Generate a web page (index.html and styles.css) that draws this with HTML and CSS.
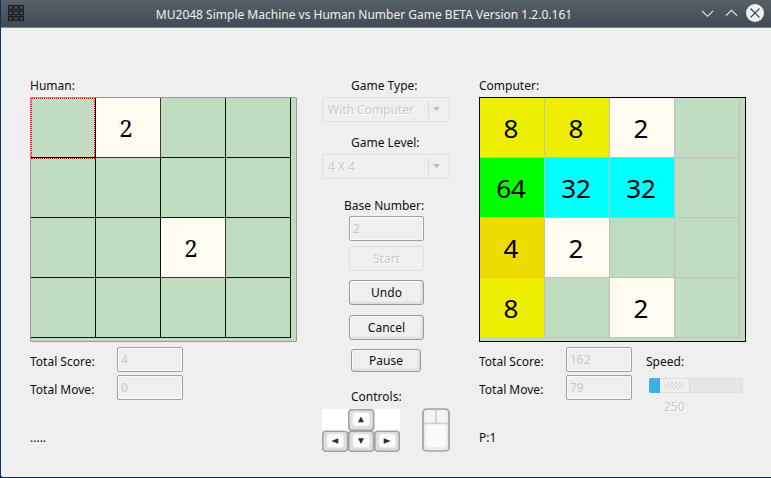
FILE: index.html
```html
<!DOCTYPE html>
<html lang="en">
<head>
<meta charset="utf-8">
<title>MU2048</title>
<link rel="stylesheet" href="styles.css">
</head>
<body>
<div class="window">
  <header class="titlebar">
    <svg class="app-icon" width="16" height="16" viewBox="0 0 16 16" fill="none" stroke="#181b1e" stroke-width="1.2">
      <path d="M.6.6h3.8v3.8H.6zM6.1.6h3.8v3.8H6.1zM11.6.6h3.8v3.8h-3.8zM.6 6.1h3.8v3.8H.6zM6.1 6.1h3.8v3.8H6.1zM11.6 6.1h3.8v3.8h-3.8zM.6 11.6h3.8v3.8H.6zM6.1 11.6h3.8v3.8H6.1zM11.6 11.6h3.8v3.8h-3.8z"/>
    </svg>
    <h1 class="title">MU2048 Simple Machine vs Human Number Game BETA Version 1.2.0.161</h1>
    <svg class="window-buttons" width="66" height="20" viewBox="0 0 66 20" fill="none" stroke="#eff0f1" stroke-width="1.1">
      <path d="M4 7.8l5.5 5.5L15 7.8M28 12.7l5.5-5.5 5.5 5.5"/>
      <circle cx="57" cy="10" r="9" fill="#eff0f1" stroke="none"/>
      <path d="M52.5 5.5l9 9M61.5 5.5l-9 9" stroke="#3f474d"/>
    </svg>
  </header>
  <main class="content">
    <section class="player">
      <div class="label">Human:</div>
      <div class="board human">
        <div class="cell focus"></div><div class="cell n2">2</div><div class="cell"></div><div class="cell"></div>
        <div class="cell"></div><div class="cell"></div><div class="cell"></div><div class="cell"></div>
        <div class="cell"></div><div class="cell"></div><div class="cell n2">2</div><div class="cell"></div>
        <div class="cell"></div><div class="cell"></div><div class="cell"></div><div class="cell"></div>
      </div>
      <div class="stats">
        <div class="label">Total Score:</div><div class="field">4</div>
        <div class="label">Total Move:</div><div class="field">0</div>
      </div>
      <div class="label status">.....</div>
    </section>

    <section class="settings">
      <div class="label">Game Type:</div>
      <div class="select">With Computer<span class="arrow"></span></div>
      <div class="label level-label">Game Level:</div>
      <div class="select">4 X 4<span class="arrow"></span></div>
      <div class="label base-label">Base Number:</div>
      <div class="field base">2</div>
      <div class="button disabled">Start</div>
      <div class="button undo">Undo</div>
      <div class="button cancel">Cancel</div>
      <div class="button pause">Pause</div>
      <div class="label controls-label">Controls:</div>
      <div class="controls">
        <svg width="78" height="43" viewBox="0 0 78 43">
          <path fill="#fff" d="M0 0h78v43H0z"/>
          <g fill="#dedede" stroke="#a2a2a2" stroke-width="1.6">
            <rect x="26.8" y=".8" width="24.9" height="20.4" rx="3"/>
            <rect x=".8" y="22.3" width="24.9" height="19.9" rx="3"/>
            <rect x="26.8" y="22.3" width="24.9" height="19.9" rx="3"/>
            <rect x="52.8" y="22.3" width="24.4" height="19.9" rx="3"/>
          </g>
          <g fill="#fcfcfc" stroke="#ececec">
            <rect x="31" y="3.5" width="16.5" height="13.5" rx="2.5"/>
            <rect x="5" y="25" width="16.5" height="13.5" rx="2.5"/>
            <rect x="31" y="25" width="16.5" height="13.5" rx="2.5"/>
            <rect x="57" y="25" width="16.5" height="13.5" rx="2.5"/>
          </g>
          <path fill="#303030" d="M39 7.5l3 5.8h-6zM39 35l3-5.8h-6zM9.3 32l7-2.8v5.6zM68.7 32l-7-2.8v5.6z"/>
        </svg>
        <svg width="28" height="44" viewBox="0 0 28 44">
          <rect x="1" y="1" width="26" height="42" rx="3.5" fill="#ececec" stroke="#a2a2a2" stroke-width="1.7"/>
          <rect x="4" y="16" width="20" height="23" rx="4" fill="#fafafa"/>
          <path d="M4 14V6q0-3 3-3h6v11zM15 14V3h6q3 0 3 3v8z" fill="#f5f5f5"/>
          <path d="M2 15.5h24M14 2v13" fill="none" stroke="#cdcdcd" stroke-width="1.5"/>
        </svg>
      </div>
    </section>

    <section class="player">
      <div class="label">Computer:</div>
      <div class="board computer">
        <div class="cell n8">8</div><div class="cell n8">8</div><div class="cell n2">2</div><div class="cell"></div>
        <div class="cell n64">64</div><div class="cell n32">32</div><div class="cell n32">32</div><div class="cell"></div>
        <div class="cell n4">4</div><div class="cell n2">2</div><div class="cell"></div><div class="cell"></div>
        <div class="cell n8">8</div><div class="cell"></div><div class="cell n2">2</div><div class="cell"></div>
      </div>
      <div class="stats with-speed">
        <div class="label">Total Score:</div><div class="field">162</div><div class="label speed">Speed:</div>
        <div class="label">Total Move:</div><div class="field">79</div>
        <div class="slider"><span class="fill"></span><span class="thumb"></span></div>
      </div>
      <div class="label speed-value">250</div>
      <div class="label status">P:1</div>
    </section>
  </main>
</div>
</body>
</html>
```
FILE: styles.css
```css
* { box-sizing: border-box; }

body {
  margin: 0;
  background: #12305e;
  font: 12px/18px "Noto Sans", "Open Sans", sans-serif;
  color: #101010;
}

.window {
  height: 477px;
  margin-left: 1px;
  background: #efefef;
  border-radius: 3px 0 0 2px;
  overflow: hidden;
}

.titlebar {
  display: flex;
  align-items: center;
  height: 28px;
  padding: 0 7px 1px 7px;
  border-bottom: 1px solid #3d9fd6;
  background: linear-gradient(#566068, #434b52);
}

.title {
  flex: 1;
  margin: 0;
  padding: 4px 0 0 6px;
  text-align: center;
  font-size: 12px;
  font-weight: 400;
  color: #eff0f1;
}

.content { display: flex; padding: 49px 0 0 29px; }

.player { width: 267px; }

.label { height: 20px; white-space: nowrap; }

.board {
  display: grid;
  grid-template-columns: repeat(4, 65px);
  grid-auto-rows: 60px;
  width: 267px;
  height: 245px;
  border: 1px solid #999;
  border-radius: 1px;
  background: #c0dcc0;
}

.cell {
  border: solid #001900;
  border-width: 0 1px 1px 0;
  padding-right: 2px;
  text-align: center;
  font-size: 26px;
  line-height: 60px;
  color: #000;
}

.human .cell { font-family: "Noto Serif", "DejaVu Serif Condensed", "DejaVu Serif", serif; font-size: 24px; }
.human .n2 { padding-right: 4px; border-color: #3f3530; }
.human .focus { padding: 0; border-color: #000; }
.focus::after {
  content: "";
  display: block;
  height: 59px;
  border: 1px dotted #f00000;
}

.computer { border-color: #000; border-radius: 0; }
.computer .cell { border-color: #c0c0c0; }

.n2 { background: #fffbf0; }
.n4 { background: #eedc00; }
.n8 { background: #eeee00; }
.n32 { background: #00ffff; }
.n64 { background: #00ff00; }

.stats {
  display: grid;
  grid-template-columns: 87px 66px;
  grid-auto-rows: 25px;
  row-gap: 3px;
  margin-top: 5px;
}
.stats .label { padding-top: 6px; }

.with-speed { grid-template-columns: 87px 66px 97px; }
.speed { padding-left: 14px; }

.field {
  height: 25px;
  padding: 3px 3px 0;
  border: 1px solid #a0a0a0;
  border-radius: 2px;
  box-shadow: inset 0 0 0 1px #fafafa;
  color: #c8c8c8;
}

.slider {
  display: flex;
  width: 94px;
  height: 15px;
  margin: 3px 0 0 17px;
  border: 1px solid #dfdfdf;
  border-radius: 2px;
  background: #e6e6e6;
}
.fill { width: 11px; margin: -1px 0 -1px -1px; border-radius: 2px 0 0 2px; background: #3daee9; }
.thumb {
  width: 30px;
  padding: 3px 5px;
  border-right: 1px solid #dadada;
  background:
    radial-gradient(circle, #dadada 0.9px, transparent 1px) 5px 3px / 4px 4px content-box,
    radial-gradient(circle, #dadada 0.9px, transparent 1px) 7px 5px / 4px 4px content-box,
    #efefef;
}

.speed-value { height: 18px; padding-left: 185px; margin-top: -2px; color: #c8c8c8; text-shadow: 1px 1px #fff; }
.status { margin-top: 29px; }
.speed-value + .status { margin-top: 13px; }

.settings {
  display: flex;
  flex-direction: column;
  width: 128px;
  margin: 0 29px 0 25px;
}
.settings > .label { padding-left: 29px; }

.select {
  display: flex;
  justify-content: space-between;
  height: 25px;
  padding: 3px 0 0 5px;
  border: 1px solid #dedede;
  border-radius: 3px;
  color: #c8c8c8;
  text-shadow: 1px 1px #fff;
}
.arrow {
  width: 21px;
  height: 17px;
  padding: 6px 0 0 4px;
  border-left: 1px solid #dadada;
}
.arrow::before {
  content: "";
  display: block;
  width: 7px;
  height: 4px;
  background: #bdbdbd;
  clip-path: polygon(0 0, 100% 0, 50% 100%);
}

.level-label { margin-top: 12px; }
.settings > .base-label { height: 19px; margin-top: 18px; padding-left: 22px; }
.base { width: 75px; margin-left: 27px; }

.button {
  width: 75px;
  height: 25px;
  margin: 10px 0 0 27px;
  border: 1px solid #999;
  border-radius: 3px;
  box-shadow: inset -2px -2px 2px #dcdcdc, inset 1px 1px #fafafa;
  text-align: center;
  line-height: 24px;
}
.disabled {
  margin-top: 5px;
  border-color: #dedede;
  box-shadow: none;
  color: #c8c8c8;
  text-shadow: 1px 1px #fff;
}
.undo { margin-top: 9px; }
.pause { width: 70px; height: 23px; margin: 9px 0 0 29px; line-height: 22px; }

.controls-label { margin-top: 16px; }
.controls { display: flex; justify-content: space-between; align-items: flex-end; height: 44px; }
```
